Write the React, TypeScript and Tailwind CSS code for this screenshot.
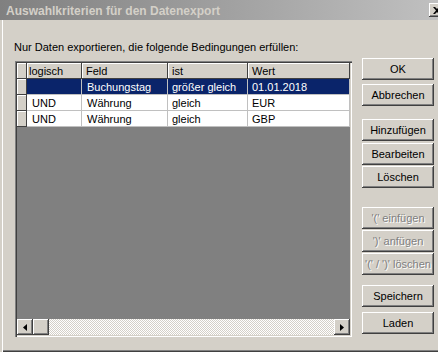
import React from "react";

const raised =
  "shadow-[inset_-1px_-1px_0_#404040,inset_1px_1px_0_#ffffff,inset_-2px_-2px_0_#808080]";

function Btn({ label, disabled, className = "" }: { label: string; disabled?: boolean; className?: string }) {
  return (
    <div
      className={`w-[72px] h-[22px] flex items-center justify-center bg-[#d4d0c8] text-[11px] leading-[13px] ${raised} ${
        disabled ? "text-[#808080] [text-shadow:1px_1px_0_#ffffff]" : "text-black"
      } ${className}`}
    >
      {label}
    </div>
  );
}

type Row = { l: string; f: string; i: string; w: string; sel?: boolean };
const rows: Row[] = [
  { l: "", f: "Buchungstag", i: "größer gleich", w: "01.01.2018", sel: true },
  { l: "UND", f: "Währung", i: "gleich", w: "EUR" },
  { l: "UND", f: "Währung", i: "gleich", w: "GBP" },
];

function Cell({ text, w, sel, pl = "pl-[5px]" }: { text: string; w: string; sel?: boolean; pl?: string }) {
  return (
    <div
      className={`${w} h-[16px] box-border border-r border-b border-[#c0c0c0] ${pl} pt-[1px] text-[11px] leading-[14px] whitespace-nowrap overflow-hidden ${
        sel ? "bg-[#0a246a] text-white" : "bg-white text-black"
      }`}
    >
      {text}
    </div>
  );
}

function Head({ text, w, pl = "pl-[4px]" }: { text: string; w: string; pl?: string }) {
  return (
    <div
      className={`${w} h-[16px] bg-[#d4d0c8] ${pl} pt-[1px] text-[11px] leading-[14px] text-black shadow-[inset_-1px_-1px_0_#404040,inset_1px_1px_0_#ffffff] whitespace-nowrap`}
    >
      {text}
    </div>
  );
}

function Arrow({ dir }: { dir: "l" | "r" }) {
  return (
    <div className={`w-[16px] h-[16px] bg-[#d4d0c8] flex items-center justify-center ${raised}`}>
      <svg width="4" height="7" viewBox="0 0 4 7">
        {dir === "l" ? <polygon points="4,0 4,7 0,3.5" fill="#000" /> : <polygon points="0,0 0,7 4,3.5" fill="#000" />}
      </svg>
    </div>
  );
}

export default function App() {
  return (
    <div className="w-[438px] h-[352px] bg-[#d4d0c8] overflow-hidden flex flex-col font-['Liberation_Sans',Arial,sans-serif]">
      {/* Title bar */}
      <div className="h-[20px] flex items-center bg-gradient-to-r from-[#808080] to-[#c0c0c0] pl-[6px]">
        <span className="text-[#d4d0c8] font-bold text-[12px] leading-[14px] pt-[1px] whitespace-nowrap">
          Auswahlkriterien für den Datenexport
        </span>
        <div className={`ml-auto mr-[-7px] w-[16px] h-[14px] bg-[#d4d0c8] flex items-center justify-center ${raised}`}>
          <svg width="8" height="7" viewBox="0 0 8 7">
            <path d="M0 0 L2 0 L4 2 L6 0 L8 0 L5 3.5 L8 7 L6 7 L4 5 L2 7 L0 7 L3 3.5 Z" fill="#000" />
          </svg>
        </div>
      </div>

      {/* Body */}
      <div className="flex-1 flex pl-[15px] shadow-[inset_2px_0_0_#d4d0c8,inset_3px_0_0_#ffffff,inset_0_-1px_0_#404040,inset_0_-2px_0_#808080]">
        <div className="w-[337px] flex flex-col">
          <div className="mt-[21px] ml-[-1px] text-[11px] leading-[13px] text-black whitespace-nowrap">
            Nur Daten exportieren, die folgende Bedingungen erfüllen:
          </div>
          <div className="mt-[7px] h-[276px] p-[2px] bg-[#808080] shadow-[inset_1px_1px_0_#808080,inset_2px_2px_0_#404040,inset_-1px_-1px_0_#ffffff,inset_-2px_-2px_0_#d4d0c8]">
            <div className="h-full flex flex-col bg-[#808080]">
              <div className="flex">
                <Head text="" w="w-[10px]" pl="" />
                <Head text="logisch" w="w-[55px]" pl="pl-[2px]" />
                <Head text="Feld" w="w-[86px]" />
                <Head text="ist" w="w-[80px]" />
                <Head text="Wert" w="flex-1" />
              </div>
              {rows.map((r, idx) => (
                <div key={idx} className="flex">
                  <div className="w-[10px] h-[16px] bg-[#d4d0c8] shadow-[inset_-1px_-1px_0_#404040,inset_1px_1px_0_#ffffff]" />
                  <Cell text={r.l} w="w-[55px]" sel={r.sel} />
                  <Cell text={r.f} w="w-[86px]" sel={r.sel} />
                  <Cell text={r.i} w="w-[80px]" sel={r.sel} pl="pl-[4px]" />
                  <Cell text={r.w} w="flex-1" sel={r.sel} pl="pl-[4px]" />
                </div>
              ))}
              <div className="flex-1" />
              <div className="h-[16px] flex">
                <Arrow dir="l" />
                <div className={`w-[16px] h-[16px] bg-[#d4d0c8] ${raised}`} />
                <div className="flex-1 bg-[image:repeating-conic-gradient(#ffffff_0%_25%,#d4d0c8_0%_50%)] [background-size:2px_2px]" />
                <Arrow dir="r" />
              </div>
            </div>
          </div>
        </div>

        <div className="ml-[10px] pt-[38px] flex flex-col">
          <Btn label="OK" />
          <Btn label="Abbrechen" className="mt-[4px]" />
          <Btn label="Hinzufügen" className="mt-[13px]" />
          <Btn label="Bearbeiten" className="mt-[2px]" />
          <Btn label="Löschen" className="mt-[1px]" />
          <Btn label="'(' einfügen" disabled className="mt-[19px]" />
          <Btn label="')' anfügen" disabled className="mt-[1px]" />
          <Btn label="'(' / ')' löschen" disabled className="mt-[1px]" />
          <Btn label="Speichern" className="mt-[10px]" />
          <Btn label="Laden" className="mt-[5px]" />
        </div>
      </div>
    </div>
  );
}
